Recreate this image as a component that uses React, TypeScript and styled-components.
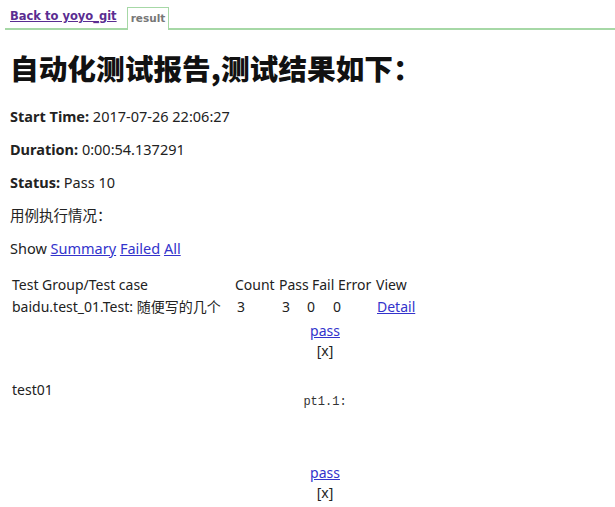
import React from "react";
import styled, { createGlobalStyle } from "styled-components";

const GlobalStyle = createGlobalStyle`
	html, body {
		margin: 0;
		padding: 0;
		background: #fff;
	}
	body {
		font-family: "Noto Sans", "Noto Sans CJK SC", sans-serif;
		font-size: 14.5px;
		color: #222;
	}
`;

const Page = styled.div`
	width: 615px;
	height: 507px;
	overflow: hidden;
`;

const Tabs = styled.div`
	display: flex;
	align-items: flex-end;
	gap: 10px;
	margin: 0 0 0 5px;
	padding: 7px 0 0 5px;
	height: 21px;
	border-bottom: 2px solid #a6d8a6;
	font-family: "DejaVu Sans", Verdana, sans-serif;
	font-size: 11.5px;
	font-weight: bold;
`;

const BackLink = styled.a`
	color: #5a2d91;
	text-decoration: underline;
	padding-bottom: 5px;
`;

const Tab = styled.span`
	color: #777;
	border: 1px solid #a6d8a6;
	border-bottom: none;
	background: #fff;
	padding: 4px 3px 0;
	margin-bottom: -2px;
	height: 18px;
	font-size: 10.5px;
`;

const Content = styled.div`
	padding: 0 10px;
`;

const Heading = styled.h1`
	margin: 20px 0 20px;
	font-family: "Noto Sans CJK SC", sans-serif;
	font-size: 28.7px;
	line-height: 36px;
	font-weight: 900;
	color: #111;
`;

const Line = styled.p`
	margin: 0 0 13px;
	line-height: 20px;
	b {
		font-weight: bold;
	}
`;

const Link = styled.a`
	color: #3333cc;
	text-decoration: underline;
`;

const Table = styled.div`
	margin-top: 16px;
	padding-left: 2px;
`;

const Row = styled.div<{ $cols: string }>`
	display: grid;
	grid-template-columns: ${(p) => p.$cols};
	line-height: 22px;
	font-size: 14px;
	white-space: nowrap;
`;

const DetailRow = styled.div<{ $min?: number }>`
	display: grid;
	grid-template-columns: 223px 180px;
	align-items: center;
	min-height: ${(p) => p.$min ?? 0}px;
	font-size: 14px;
`;

const Popup = styled.div`
	display: flex;
	flex-direction: column;
	align-items: center;
	align-self: start;
	line-height: 20px;
`;

const Close = styled.span`
	color: #222;
`;

const Log = styled.pre`
	margin: 34px 0 0;
	font-family: "Liberation Mono", monospace;
	font-size: 12px;
	line-height: 14px;
	color: #333;
`;

export default function App() {
	return (
		<Page>
			<GlobalStyle />
			<Tabs>
				<BackLink href="#">Back to yoyo_git</BackLink>
				<Tab>result</Tab>
			</Tabs>
			<Content>
				<Heading>自动化测试报告,测试结果如下：</Heading>
				<Line>
					<b>Start Time:</b> 2017-07-26 22:06:27
				</Line>
				<Line>
					<b>Duration:</b> 0:00:54.137291
				</Line>
				<Line>
					<b>Status:</b> Pass 10
				</Line>
				<Line>用例执行情况：</Line>
				<Line>
					Show <Link href="#">Summary</Link> <Link href="#">Failed</Link> <Link href="#">All</Link>
				</Line>
				<Table>
					<Row $cols="223px 44px 33px 26px 38px auto">
						<span>Test Group/Test case</span>
						<span>Count</span>
						<span>Pass</span>
						<span>Fail</span>
						<span>Error</span>
						<span>View</span>
					</Row>
					<Row $cols="225px 45px 25px 26px 44px auto">
						<span>baidu.test_01.Test: 随便写的几个</span>
						<span>3</span>
						<span>3</span>
						<span>0</span>
						<span>0</span>
						<Link href="#">Detail</Link>
					</Row>
					<DetailRow $min={136} style={{ marginTop: 3, marginBottom: 6 }}>
						<span>test01</span>
						<Popup>
							<Link href="#">pass</Link>
							<Close>[x]</Close>
							<Log>pt1.1:</Log>
						</Popup>
					</DetailRow>
					<DetailRow>
						<span />
						<Popup>
							<Link href="#">pass</Link>
							<Close>[x]</Close>
						</Popup>
					</DetailRow>
				</Table>
			</Content>
		</Page>
	);
}
